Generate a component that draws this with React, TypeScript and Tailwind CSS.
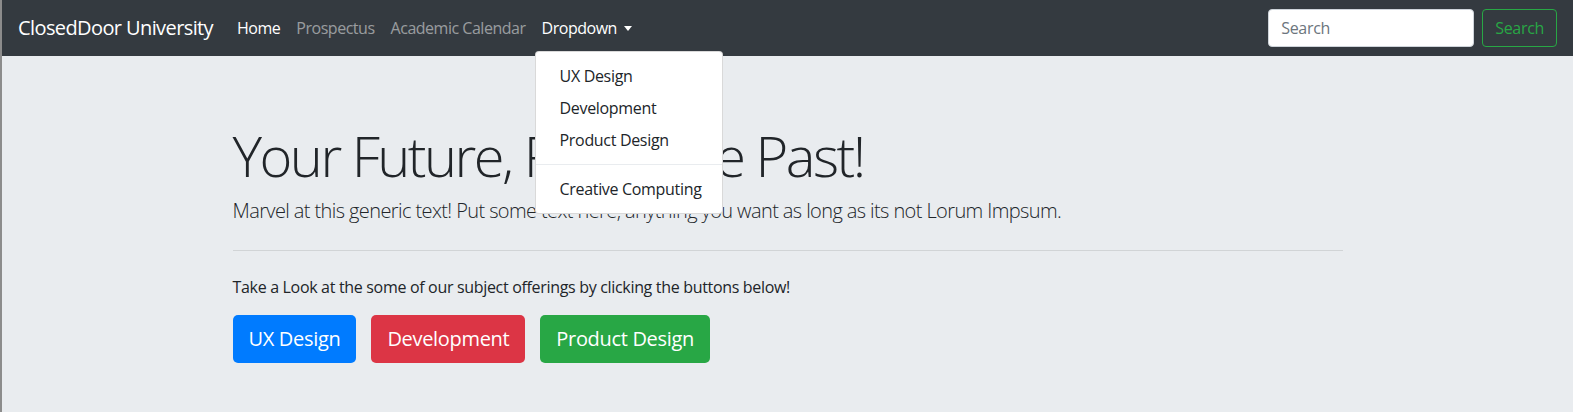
const navLinks = [
  { label: "Home", active: true },
  { label: "Prospectus", active: false },
  { label: "Academic Calendar", active: false },
];

const menuItems = ["UX Design", "Development", "Product Design"];

export default function App() {
  return (
    <div
      className="min-h-[412px] flex flex-col border-l-2 border-[#8c8c8c] bg-[#e9ecef] text-[#212529] tracking-[-0.02em]"
      style={{ fontFamily: '"Open Sans", "Noto Sans", sans-serif' }}
    >
      <nav className="h-14 bg-[#343a40] flex items-center px-4">
        <a className="text-white text-[20px] mr-4 leading-[30px] tracking-[-0.03em]">ClosedDoor University</a>
        <ul className="flex items-center tracking-[-0.03em]">
          {navLinks.map((l) => (
            <li key={l.label}>
              <a className={`px-2 text-[16px] leading-6 ${l.active ? "text-white" : "text-white/50"}`}>{l.label}</a>
            </li>
          ))}
          <li className="relative">
            <a className="px-2 text-[16px] leading-6 text-white flex items-center">
              Dropdown
              <span className="ml-[7px] w-0 h-0 border-x-[4px] border-x-transparent border-t-[5px] border-t-white" />
            </a>
            <div className="absolute left-[1px] top-[35px] w-[188px] bg-white border border-black/15 rounded py-2 z-10 tracking-[-0.02em]">
              {menuItems.map((m) => (
                <div key={m} className="px-6 h-8 flex items-center whitespace-nowrap text-[16px] text-[#212529]">
                  {m}
                </div>
              ))}
              <div className="my-2 border-t border-[#e9ecef]" />
              <div className="px-6 h-8 flex items-center whitespace-nowrap text-[16px] text-[#212529]">
                Creative Computing
              </div>
            </div>
          </li>
        </ul>
        <form className="ml-auto flex items-center gap-2">
          <input
            placeholder="Search"
            className="w-[206px] h-[38px] rounded bg-white border border-[#ced4da] px-3 text-[16px] placeholder:text-[#6c757d] outline-none"
          />
          <button className="h-[38px] px-3 rounded border border-[#28a745] text-[#28a745] text-[16px]">Search</button>
        </form>
      </nav>

      <main className="flex-1 pt-[66px]">
        <div className="w-[1110px] mx-auto">
          <h1 className="text-[56px] font-light leading-[1.2] tracking-[-0.045em]">Your Future, From The Past!</h1>
          <p className="text-[20px] font-light leading-[1.5] mt-[7px] tracking-[-0.03em]">
            Marvel at this generic text! Put some text here, anything you want as long as its not Lorum Impsum.
          </p>
          <hr className="my-6 border-t border-black/10" />
          <p className="text-[16px] leading-6">
            Take a Look at the some of our subject offerings by clicking the buttons below!
          </p>
          <div className="flex gap-[15px] mt-4">
            <button className="h-12 px-4 rounded-[5px] bg-[#007bff] text-white text-[20px]">UX Design</button>
            <button className="h-12 px-4 rounded-[5px] bg-[#dc3545] text-white text-[20px]">Development</button>
            <button className="h-12 px-4 rounded-[5px] bg-[#28a745] text-white text-[20px]">Product Design</button>
          </div>
        </div>
      </main>
    </div>
  );
}
